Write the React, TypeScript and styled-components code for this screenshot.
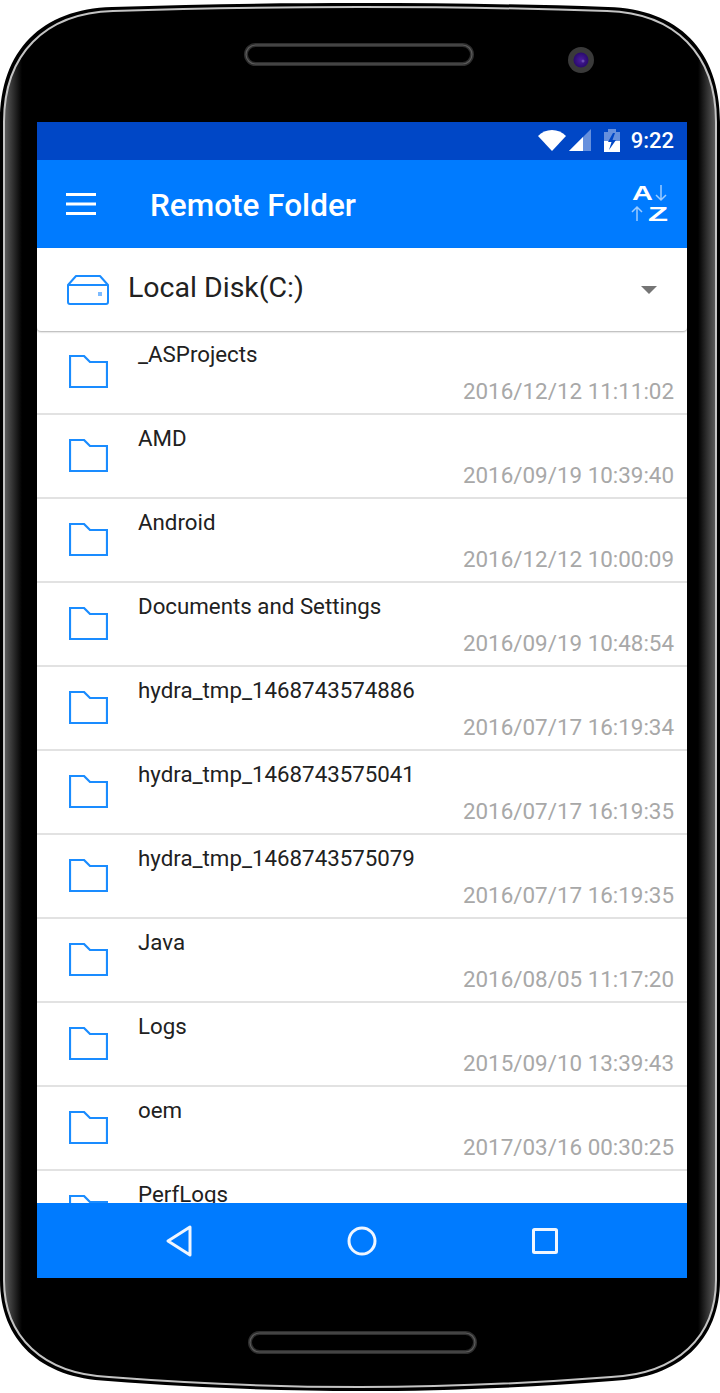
import React from 'react';
import styled, { createGlobalStyle } from 'styled-components';

const folders = [
  { name: '_ASProjects', date: '2016/12/12 11:11:02' },
  { name: 'AMD', date: '2016/09/19 10:39:40' },
  { name: 'Android', date: '2016/12/12 10:00:09' },
  { name: 'Documents and Settings', date: '2016/09/19 10:48:54' },
  { name: 'hydra_tmp_1468743574886', date: '2016/07/17 16:19:34' },
  { name: 'hydra_tmp_1468743575041', date: '2016/07/17 16:19:35' },
  { name: 'hydra_tmp_1468743575079', date: '2016/07/17 16:19:35' },
  { name: 'Java', date: '2016/08/05 11:17:20' },
  { name: 'Logs', date: '2015/09/10 13:39:43' },
  { name: 'oem', date: '2017/03/16 00:30:25' },
  { name: 'PerfLogs' },
];

const BODY_OUTER =
  'M0 122 C0 50 42 9 112 7 C200 4 280 3 360 3 C440 3 520 4 608 7 C678 9 720 50 720 122 L720 1280 C720 1340 680 1378 612 1381 C520 1388 440 1391 360 1391 C280 1391 200 1388 108 1381 C40 1378 0 1340 0 1280 Z';
const BODY_INNER =
  'M4 122 C4 54 45 13 113 11 C200 8 280 7 360 7 C440 7 520 8 607 11 C675 13 716 54 716 122 L716 1280 C716 1337 677 1374 611 1377 C520 1384 440 1387 360 1387 C280 1387 200 1384 109 1377 C43 1374 4 1337 4 1280 Z';

const GlobalStyle = createGlobalStyle`
  html, body {
    margin: 0;
    padding: 0;
    background: #fff;
    font-family: Roboto, "Liberation Sans", sans-serif;
  }
`;

const Phone = styled.div`
  position: relative;
  width: 720px;
  height: 1393px;
  box-sizing: border-box;
  padding: 122px 33px 115px 37px;
  overflow: hidden;
`;

const PhoneBody = styled.svg`
  position: absolute;
  left: 0;
  top: 0;
`;

const Screen = styled.div`
  position: relative;
  display: flex;
  flex-direction: column;
  height: 1156px;
  background: #fff;
  overflow: hidden;
`;

const StatusBar = styled.div`
  flex: none;
  height: 38px;
  box-sizing: border-box;
  padding-right: 13px;
  display: flex;
  align-items: center;
  justify-content: flex-end;
  background: #0047c6;
`;

const StatusIcons = styled.svg`
  margin-right: 11px;
`;

const Clock = styled.span`
  color: #fff;
  font-size: 22px;
  font-weight: 500;
  line-height: 38px;
`;

const Toolbar = styled.header`
  flex: none;
  height: 88px;
  box-sizing: border-box;
  padding: 0 17px 0 29px;
  display: flex;
  align-items: center;
  background: #007bff;
`;

const MenuIcon = styled.svg`
  flex: none;
  margin-right: 54px;
`;

const Title = styled.h1`
  flex: 1;
  margin: 3px 0 0;
  color: #fff;
  font-size: 31.5px;
  font-weight: 500;
  line-height: 40px;
`;

const DiskPicker = styled.div`
  position: relative;
  z-index: 1;
  flex: none;
  height: 83px;
  box-sizing: border-box;
  padding: 0 30px 0 30px;
  display: flex;
  align-items: center;
  background: #fff;
  border-radius: 0 0 4px 4px;
  box-shadow: 0 1px 2px rgba(0, 0, 0, 0.32);
`;

const DiskLabel = styled.span`
  flex: 1;
  margin: 0 0 4px 19px;
  color: #212121;
  font-size: 28.5px;
  line-height: 36px;
`;

const Caret = styled.span`
  width: 0;
  height: 0;
  border-left: 8px solid transparent;
  border-right: 8px solid transparent;
  border-top: 8px solid #757575;
`;

const FolderList = styled.ul`
  flex: 1;
  min-height: 0;
  margin: 0;
  padding: 0;
  list-style: none;
  overflow: hidden;
`;

const FolderRow = styled.li`
  height: 84px;
  box-sizing: border-box;
  padding: 0 13px 0 32px;
  display: flex;
  background: #fff;
  border-bottom: 2px solid #e2e2e2;
`;

const FolderIcon = styled.svg`
  flex: none;
  margin-top: 24px;
`;

const FolderText = styled.div`
  flex: 1;
  min-width: 0;
  margin-left: 30px;
  display: flex;
  flex-direction: column;
`;

const FolderName = styled.span`
  margin-top: 10px;
  color: #212121;
  font-size: 22.3px;
  line-height: 26px;
`;

const FolderDate = styled.span`
  margin-top: 11px;
  align-self: flex-end;
  color: #a8a8a8;
  font-size: 22.4px;
  line-height: 26px;
`;

const NavBar = styled.nav`
  flex: none;
  height: 75px;
  display: grid;
  grid-template-columns: repeat(3, 183px);
  justify-content: center;
  justify-items: center;
  align-items: center;
  background: #007bff;
`;

const Folder = () => (
  <FolderIcon width="39" height="34" viewBox="0 0 39 34" aria-hidden="true">
    <path d="M1 1 H15 L21 7 H38 V32 H1 Z" fill="none" stroke="#1a8cff" strokeWidth="2.2" />
  </FolderIcon>
);

const Disk = () => (
  <svg width="42" height="30" viewBox="0 0 42 30" aria-hidden="true">
    <path
      d="M1 10 L9 1 H33 L41 10 V27 Q41 29 39 29 H3 Q1 29 1 27 Z M1 10 H41"
      fill="none"
      stroke="#1a8cff"
      strokeWidth="2"
      strokeLinejoin="round"
    />
    <rect x="31" y="17" width="4" height="4" fill="#7dbbff" />
  </svg>
);

const Status = () => (
  <StatusIcons width="82" height="24" viewBox="0 0 82 24" aria-hidden="true">
    <path d="M0 7 C7 -1 21 -1 28 7 L14 22 Z" fill="#fff" />
    <path d="M31 22 L53 0 V22 Z" fill="#fff" fillOpacity="0.4" />
    <path d="M31 22 L45 8 V22 Z" fill="#fff" />
    <path d="M66 3 H70 V0 H78 V3 H82 V23 H66 Z" fill="#fff" fillOpacity="0.4" />
    <path d="M66 12 H82 V23 H66 Z" fill="#fff" />
    <path d="M75 4 L70 13 H73.5 L71 21 L78 11 H74.5 L77 4 Z" fill="#0047c6" />
  </StatusIcons>
);

const SortIcon = () => (
  <svg width="40" height="46" viewBox="-2 -4 40 46" aria-hidden="true">
    <text
      x="0"
      y="15"
      fill="#fff"
      fontFamily="Liberation Sans"
      fontWeight="700"
      fontSize="20"
      textLength="21"
      lengthAdjust="spacingAndGlyphs"
    >
      A
    </text>
    <text
      x="16"
      y="36"
      fill="#fff"
      fontFamily="Liberation Sans"
      fontWeight="700"
      fontSize="20"
      textLength="20"
      lengthAdjust="spacingAndGlyphs"
    >
      Z
    </text>
    <path d="M29 0 V15 M24 10 L29 15 L34 10" fill="none" stroke="#9ccbff" strokeWidth="1.5" />
    <path d="M5 36 V22 M0 27 L5 22 L10 27" fill="none" stroke="#9ccbff" strokeWidth="1.5" />
  </svg>
);

const BackIcon = () => (
  <svg width="26" height="32" viewBox="0 0 26 32" aria-hidden="true">
    <path d="M24 2 V30 L2 16 Z" fill="none" stroke="#f0f6ff" strokeWidth="3" strokeLinejoin="round" />
  </svg>
);

const HomeIcon = () => (
  <svg width="30" height="30" viewBox="0 0 30 30" aria-hidden="true">
    <circle cx="15" cy="15" r="13" fill="none" stroke="#f0f6ff" strokeWidth="3" />
  </svg>
);

const RecentIcon = () => (
  <svg width="26" height="26" viewBox="0 0 26 26" aria-hidden="true">
    <rect x="1.5" y="1.5" width="23" height="23" rx="1" fill="none" stroke="#f0f6ff" strokeWidth="3" />
  </svg>
);

// the handset itself: silhouette, chrome line, side shading, speakers and camera
const Handset = () => (
  <PhoneBody width="720" height="1393" viewBox="0 0 720 1393" aria-hidden="true">
    <defs>
      <linearGradient id="sideLeft" x1="0" x2="1" y1="0" y2="0">
        <stop offset="0" stopColor="#5a5a5a" />
        <stop offset="1" stopColor="#000" />
      </linearGradient>
      <linearGradient id="sideRight" x1="0" x2="1" y1="0" y2="0">
        <stop offset="0" stopColor="#000" />
        <stop offset="1" stopColor="#5a5a5a" />
      </linearGradient>
      <clipPath id="inner">
        <path d={BODY_INNER} />
      </clipPath>
      <radialGradient id="lens">
        <stop offset="0" stopColor="#4a1d9c" />
        <stop offset="1" stopColor="#2a0a6e" />
      </radialGradient>
    </defs>
    <path d={BODY_OUTER} fill="#000" />
    <path d={BODY_INNER} fill="#000" />
    <g clipPath="url(#inner)">
      <rect x="5" y="30" width="17" height="1340" fill="url(#sideLeft)" />
      <rect x="698" y="30" width="17" height="1340" fill="url(#sideRight)" />
    </g>
    <path d={BODY_INNER} fill="none" stroke="#c4c4c4" strokeWidth="2" />
    <rect x="246" y="45" width="226" height="19" rx="9.5" fill="#000" stroke="#2e2e2e" strokeWidth="4" />
    <rect x="246" y="45" width="226" height="19" rx="9.5" fill="none" stroke="#5a5a5a" strokeWidth="1.2" />
    <rect x="250" y="1333" width="225" height="19" rx="9.5" fill="#000" stroke="#2e2e2e" strokeWidth="4" />
    <rect x="250" y="1333" width="225" height="19" rx="9.5" fill="none" stroke="#5a5a5a" strokeWidth="1.2" />
    <circle cx="581" cy="60" r="13" fill="#3a3a3a" />
    <circle cx="581" cy="60" r="7.5" fill="url(#lens)" />
    <circle cx="583" cy="61" r="1.5" fill="#6b4bb0" />
  </PhoneBody>
);

export default function App() {
  return (
    <>
      <GlobalStyle />
      <Phone>
        <Handset />
        <Screen>
          <StatusBar>
            <Status />
            <Clock>9:22</Clock>
          </StatusBar>
          <Toolbar>
            <MenuIcon width="30" height="22" viewBox="0 0 30 22" aria-hidden="true">
              <path d="M0 1.5 H30 M0 11 H30 M0 20.5 H30" stroke="#fff" strokeWidth="3" />
            </MenuIcon>
            <Title>Remote Folder</Title>
            <SortIcon />
          </Toolbar>
          <DiskPicker>
            <Disk />
            <DiskLabel>Local Disk(C:)</DiskLabel>
            <Caret />
          </DiskPicker>
          <FolderList>
            {folders.map((f) => (
              <FolderRow key={f.name}>
                <Folder />
                <FolderText>
                  <FolderName>{f.name}</FolderName>
                  {f.date && <FolderDate>{f.date}</FolderDate>}
                </FolderText>
              </FolderRow>
            ))}
          </FolderList>
          <NavBar>
            <BackIcon />
            <HomeIcon />
            <RecentIcon />
          </NavBar>
        </Screen>
      </Phone>
    </>
  );
}
